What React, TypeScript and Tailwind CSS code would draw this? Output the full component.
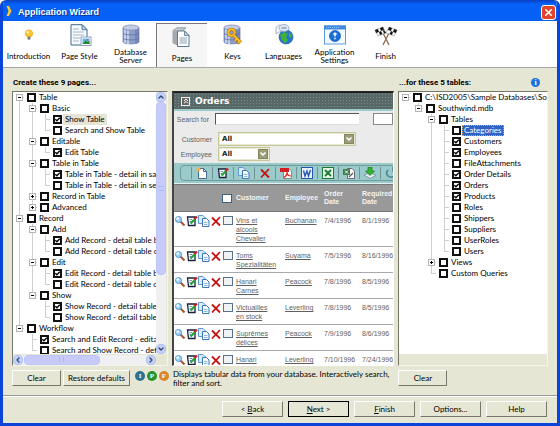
import React from 'react';
import { X, ChevronUp, ChevronDown, ChevronLeft, ChevronRight, ChevronsUp } from 'lucide-react';

type Node = {
  label: string;
  checked?: boolean;
  collapsed?: boolean;
  tone?: 'soft' | 'active';
  children?: Node[];
};

const pageTree: Node[] = [
  {
    label: 'Table',
    children: [
      {
        label: 'Basic',
        children: [
          { label: 'Show Table', checked: true, tone: 'soft' },
          { label: 'Search and Show Table' },
        ],
      },
      { label: 'Editable', children: [{ label: 'Edit Table', checked: true }] },
      {
        label: 'Table in Table',
        children: [
          { label: 'Table in Table - detail in same row', checked: true },
          { label: 'Table in Table - detail in separate row' },
        ],
      },
      { label: 'Record in Table', collapsed: true },
      { label: 'Advanced', collapsed: true },
    ],
  },
  {
    label: 'Record',
    children: [
      {
        label: 'Add',
        children: [
          { label: 'Add Record - detail table below', checked: true },
          { label: 'Add Record - detail table on tab' },
        ],
      },
      {
        label: 'Edit',
        children: [
          { label: 'Edit Record - detail table below', checked: true },
          { label: 'Edit Record - detail table on tab' },
        ],
      },
      {
        label: 'Show',
        children: [
          { label: 'Show Record - detail table below', checked: true },
          { label: 'Show Record - detail table on tab' },
        ],
      },
    ],
  },
  {
    label: 'Workflow',
    children: [
      { label: 'Search and Edit Record - editable', checked: true },
      { label: 'Search and Show Record - detail' },
    ],
  },
];

const tableTree: Node[] = [
  {
    label: 'C:\\ISD2005\\Sample Databases\\Southwind',
    children: [
      {
        label: 'Southwind.mdb',
        children: [
          {
            label: 'Tables',
            children: [
              { label: 'Categories', tone: 'active' },
              { label: 'Customers', checked: true },
              { label: 'Employees', checked: true },
              { label: 'FileAttachments' },
              { label: 'Order Details', checked: true },
              { label: 'Orders', checked: true },
              { label: 'Products', checked: true },
              { label: 'Roles' },
              { label: 'Shippers' },
              { label: 'Suppliers' },
              { label: 'UserRoles' },
              { label: 'Users' },
            ],
          },
          { label: 'Views', collapsed: true },
          { label: 'Custom Queries' },
        ],
      },
    ],
  },
];

const orders = [
  ['Vins et', 'alcools', 'Chevalier', 'Buchanan', '7/4/1996', '8/1/1996'],
  ['Toms', 'Spezialitäten', '', 'Suyama', '7/5/1996', '8/16/1996'],
  ['Hanari', 'Carnes', '', 'Peacock', '7/8/1996', '8/5/1996'],
  ['Victuailles', 'en stock', '', 'Leverling', '7/8/1996', '8/5/1996'],
  ['Suprêmes', 'délices', '', 'Peacock', '7/9/1996', '8/6/1996'],
  ['Hanari', 'Carnes', '', 'Leverling', '7/10/1996', '7/24/1996'],
];

/* ---------- tree ---------- */

type GuideProps = { up?: boolean; down?: boolean; across?: boolean; box?: 'plus' | 'minus' };

const Guide = ({ up, down, across, box }: GuideProps) => (
  <svg className="w-[13px] h-[11px] shrink-0" viewBox="0 0 13 11" fill="none" stroke="#cfcfcf" shapeRendering="crispEdges">
    {up && <path d="M6.5 0V5.5" />}
    {down && <path d="M6.5 5.5V11" />}
    {across && <path d="M6 5.5H11" />}
    {box && (
      <>
        <rect x="3.5" y="2.5" width="6" height="6" fill="#fff" stroke="#b4b4b4" />
        <path d="M5 5.5H8" stroke="#000" />
        {box === 'plus' && <path d="M6.5 4V7" stroke="#000" />}
      </>
    )}
  </svg>
);

const Tick = () => (
  <svg className="absolute inset-0 w-[9px] h-[9px] pointer-events-none" viewBox="0 0 9 9" fill="none" stroke="#000" strokeWidth="1.3">
    <path d="M2.3 4.2L3.9 5.8L6.8 2.7" />
  </svg>
);

const TreeLevel = ({ nodes, trail = [] }: { nodes: Node[]; trail?: boolean[] }) => (
  <ul>
    {nodes.map((node, i) => {
      const isLast = i === nodes.length - 1;
      const hasBox = Boolean(node.children || node.collapsed);
      const tone =
        node.tone === 'active'
          ? 'bg-[#2f62c4] text-white outline outline-1 -outline-offset-1 outline-dotted outline-[#d8a860]'
          : node.tone === 'soft'
            ? 'bg-[#e6e4d4]'
            : '';
      return (
        <li key={node.label}>
          <div className="flex items-center h-[11px]">
            {trail.map((open, depth) => (
              <Guide key={depth} up={open} down={open} />
            ))}
            <Guide
              up={trail.length > 0 || i > 0}
              down={!isLast}
              across
              box={hasBox ? (node.collapsed ? 'plus' : 'minus') : undefined}
            />
            <label className="flex items-center whitespace-nowrap">
              <span className="relative w-[9px] h-[9px] ml-px mr-px shrink-0">
                <input
                  type="checkbox"
                  defaultChecked={node.checked}
                  className="block appearance-none w-[9px] h-[9px] border-2 border-[#111] bg-white"
                />
                {node.checked && <Tick />}
              </span>
              <span className={`px-[2px] leading-[11px] ${tone}`}>{node.label}</span>
            </label>
          </div>
          {node.children && <TreeLevel nodes={node.children} trail={[...trail, !isLast]} />}
        </li>
      );
    })}
  </ul>
);

/* ---------- wizard step icons ---------- */

const Cylinder = () => (
  <>
    <path d="M2 4V18C2 20.5 18 20.5 18 18V4Z" fill="#8e9fcb" stroke="#6a7aa8" strokeWidth=".7" />
    <path d="M4 5V19M7 6V20" stroke="#c9d4ee" strokeWidth="1.8" />
    <path d="M15 6V19M17 5V18" stroke="#6878a8" strokeWidth="1.2" />
    <path d="M2 9C2 11.5 18 11.5 18 9M2 14C2 16.5 18 16.5 18 14" fill="none" stroke="#5f70a3" strokeWidth=".8" />
    <ellipse cx="10" cy="3.6" rx="8" ry="2.6" fill="#c3cde6" stroke="#7686b3" strokeWidth=".7" />
  </>
);

const StepIcon = ({ name }: { name: string }) => (
  <svg className="w-[22px] h-[22px] overflow-visible" viewBox="0 0 22 22" fill="none">
    {name === 'Introduction' && (
      <>
        <circle cx="11" cy="9.5" r="3.6" fill="#ffc72e" stroke="#efa21a" strokeWidth=".8" />
        <circle cx="9.8" cy="8.3" r="1.3" fill="#fff3b5" />
        <path d="M9.5 12.8H12.5V15L11 16L9.5 15Z" fill="#777f88" />
      </>
    )}
    {name === 'Page Style' && (
      <>
        <path d="M2 .7H13L18 5.7V21H2Z" fill="#f7fbff" stroke="#3c6c8c" />
        <path d="M13 .7V5.7H18Z" fill="#b8d4e8" stroke="#3c6c8c" strokeWidth=".8" />
        <path d="M4 5H10M4 8H15M4 11H15M4 14H11M4 17H10" stroke="#a9b6c2" />
        <rect x="12" y="13" width="10" height="8.5" fill="#fff" stroke="#8ea3ba" />
        <rect x="13.5" y="14.5" width="7" height="5.5" fill="#65b7ef" />
        <path d="M13.5 20L16.5 16.5L18.5 18L20.5 17V20Z" fill="#23882d" />
        <circle cx="18.5" cy="16" r="1" fill="#e85a27" />
      </>
    )}
    {name === 'Database Server' && <g transform="translate(1 0)"><Cylinder /></g>}
    {name === 'Pages' && (
      <>
        <path d="M2 3.5L6 .8H15L12 3.5V19L2 16Z" fill="#c6cacd" stroke="#858b90" strokeWidth=".8" />
        <path d="M2 3.5H7V19L2 16Z" fill="#a3a9ae" />
        <path d="M6.5 4H13.5L18 8.5V19.5H6.5Z" fill="#fff" stroke="#58788c" />
        <path d="M13.5 4V8.5H18Z" fill="#b9d5e6" stroke="#58788c" strokeWidth=".8" />
        <rect x="8.5" y="10" width="7.5" height="7" fill="#c5d1d9" />
      </>
    )}
    {name === 'Keys' && (
      <>
        <Cylinder />
        <circle cx="9.5" cy="8.5" r="3.2" stroke="#a66a08" strokeWidth="3.2" />
        <circle cx="9.5" cy="8.5" r="3.2" stroke="#fbc02a" strokeWidth="2" />
        <path d="M11.5 11L19 18.5M15 14.5L12.5 17M17.5 17L15.5 19.5" stroke="#a66a08" strokeWidth="3" />
        <path d="M11.5 11L19 18.5M15 14.5L12.8 16.8M17.5 17L15.8 19" stroke="#fbc02a" strokeWidth="1.8" />
      </>
    )}
    {name === 'Languages' && (
      <>
        <circle cx="13" cy="13" r="7" fill="#2674cf" stroke="#174f8f" strokeWidth=".6" />
        <path d="M7 11L11 8L15 10L13 13L15 16L12 19L9 16ZM16 8L19 11L18 14L16 12Z" fill="#3fb338" />
        <path d="M3 5C3 0 10 0 10 4C10 8 4 8 3 10Z" fill="#f5f9ff" stroke="#8ba2bd" strokeWidth=".8" />
        <ellipse cx="11" cy="4" rx="5" ry="3.5" fill="#dce8f4" stroke="#8ba2bd" strokeWidth=".8" />
        <path d="M8.5 4H13.5" stroke="#6a7f99" />
      </>
    )}
    {name === 'Application Settings' && (
      <>
        <rect x=".5" y="2" width="21" height="18" fill="#f4f9ff" stroke="#5b9bdc" />
        <rect x="0" y="1.5" width="22" height="4" fill="#3d8be0" />
        <path d="M2 3.5H16" stroke="#8fc0f4" strokeDasharray="1 1" />
        <circle cx="11" cy="12" r="5.5" fill="#1a6fdc" stroke="#0c4fae" strokeWidth=".7" />
        <path d="M11 8.5V12.5M11 13.8V15.3M9.3 10H12.7" stroke="#fff" strokeWidth="1.5" />
      </>
    )}
    {name === 'Finish' && (
      <>
        <path d="M7 7L14 21M15 7L8 21" stroke="#8a6a50" strokeWidth="1.3" />
        <path d="M0 6L8 3L11 9L3 12ZM22 6L14 3L11 9L19 12Z" fill="#fff" stroke="#777" strokeWidth=".5" />
        <path d="M0 6L3 5L4 8L1 9ZM5 4L8 3L9 6L6 7ZM4 8L6 7L7.5 10L5 11ZM9 6L11 9L9 9.5L8 7ZM22 6L19 5L18 8L21 9ZM17 4L14 3L13 6L16 7ZM18 8L16 7L14.5 10L17 11Z" fill="#151515" />
      </>
    )}
  </svg>
);

const steps = ['Introduction', 'Page Style', 'Database Server', 'Pages', 'Keys', 'Languages', 'Application Settings', 'Finish'];

/* ---------- small glyphs for the preview ---------- */

const Glyph = ({ name }: { name: string }) => (
  <svg className="w-3 h-3 shrink-0" viewBox="0 0 12 12" fill="none">
    {name === 'search' && (
      <>
        <path d="M6.5 6.5L10.5 10.5" stroke="#b0502c" strokeWidth="2" />
        <circle cx="4.5" cy="4.5" r="3" fill="#9fd3f7" stroke="#4f94c9" />
        <circle cx="3.7" cy="3.5" r="1.2" fill="#fff" />
      </>
    )}
    {name === 'new' && (
      <>
        <path d="M2.5 1.5H7.5L10.5 4.5V11.5H2.5Z" fill="#fff" stroke="#456b90" />
        <path d="M7.5 1.5V4.5H10.5" stroke="#456b90" />
        <circle cx="2.5" cy="2.5" r="2" fill="#ffac38" />
      </>
    )}
    {name === 'edit' && (
      <>
        <path d="M1.5 2H9V10.5H2.5Z" fill="#fff" stroke="#14203c" strokeWidth="1.3" />
        <path d="M3.5 4.5H6M3.5 6.5H5" stroke="#7a96bd" />
        <path d="M4.5 8.5L9 4" stroke="#27a53a" strokeWidth="2.4" />
        <path d="M8.5 4L11 1.5" stroke="#d02020" strokeWidth="2.4" />
      </>
    )}
    {name === 'copy' && (
      <>
        <path d="M.5 .5H5L7.5 3V8.5H.5Z" fill="#d9ebfd" stroke="#5c97d3" />
        <path d="M4.5 3.5H8.5L11 6V11.5H4.5Z" fill="#f4faff" stroke="#3c74b8" />
        <path d="M6 7.5H9.5M6 9.5H9.5" stroke="#8fb7e4" />
      </>
    )}
    {name === 'delete' && <path d="M2 2.5L10 10.5M10 2L2 10.5" stroke="#c41212" strokeWidth="1.8" />}
    {name === 'pdf' && (
      <>
        <path d="M3.5 1.5H9L11.5 4V11.5H3.5Z" fill="#fff" stroke="#888" />
        <rect x="0" y="1" width="9" height="4" fill="#d3201f" />
        <path d="M4 10.5C7.5 8 7 5 7 5C7 8 9 9 11 9" stroke="#d3201f" strokeWidth="1.2" />
      </>
    )}
    {name === 'word' && (
      <>
        <rect x=".5" y=".5" width="11" height="11" fill="#e9f1ff" stroke="#2458ae" />
        <path d="M2.5 3.5L4 9L6 4L7.5 9L9.5 3" stroke="#2458ae" strokeWidth="1.4" />
      </>
    )}
    {name === 'excel' && (
      <>
        <rect x=".5" y=".5" width="11" height="11" fill="#e7f7e7" stroke="#1c7a34" />
        <path d="M3 3L9 9M9 3L3 9" stroke="#1c7a34" strokeWidth="1.9" />
      </>
    )}
    {name === 'export' && (
      <>
        <path d="M4.5 1.5H9L11.5 4V11.5H4.5Z" fill="#fff" stroke="#667" />
        <rect x="0" y="2" width="7" height="6" fill="#3f7d4c" />
        <path d="M2 3.5L5 6.5M5 3.5L2 6.5" stroke="#fff" />
        <path d="M6 10L10 6" stroke="#555" strokeWidth="1.3" />
      </>
    )}
    {name === 'import' && (
      <>
        <path d="M0 8L6 5.5L12 8.5L6 11.5Z" fill="#e8eef4" stroke="#647d93" strokeWidth=".7" />
        <path d="M4 0H8V4H10.5L6 8.5L1.5 4H4Z" fill="#35b52f" stroke="#187b1c" strokeWidth=".7" />
      </>
    )}
    {name === 'refresh' && <path d="M3 3C-1 8 5 12 9 9C11 7 10 4 8 3M8 0V4H11.5" stroke="#4c8596" strokeWidth="1.6" />}
  </svg>
);

const tools = ['new', 'edit', 'copy', 'delete', 'pdf', 'word', 'excel', 'export', 'import', 'refresh'];
const rowTools = ['search', 'edit', 'copy', 'delete'];

const SelectBox = ({ id, className }: { id: string; className: string }) => (
  <div className={`relative ${className}`}>
    <select
      id={id}
      className="block appearance-none w-full h-[14px] pl-[3px] border border-[#c5c798] outline outline-1 -outline-offset-2 outline-[#e9ead2] bg-white text-[7px] font-bold text-[#222] font-['DejaVu_Sans',sans-serif]"
    >
      <option>All</option>
    </select>
    <span className="absolute right-[2px] top-[2px] w-[10px] h-[10px] bg-[#9d9d79] border border-[#85855f] flex items-center justify-center pointer-events-none">
      <ChevronDown className="w-2 h-2 text-white shrink-0" strokeWidth={5} />
    </span>
  </div>
);

const Preview = () => (
  <section className="min-w-0 overflow-hidden border-l-2 border-t-2 border-l-[#444] border-t-[#222] border-r border-r-white border-b border-b-white bg-white font-['Liberation_Sans',sans-serif] text-[7px] text-[#5f5f5f]">
    <div className="h-4 flex items-center gap-[5px] pl-[7px] bg-[#5a6767] bg-[radial-gradient(#6f9291_25%,transparent_30%)] bg-[size:3px_3px]">
      <button aria-label="Collapse" className="w-[9px] h-[9px] bg-[#666] border border-[#eee] flex items-center justify-center">
        <ChevronsUp className="w-2 h-2 text-white shrink-0" strokeWidth={3} />
      </button>
      <h2 className="text-[9px] leading-4 font-bold text-white font-['DejaVu_Sans',sans-serif]">Orders</h2>
    </div>
    <div className="h-[2px] bg-[#9bcaca]" />

    <div className="bg-[#ebebeb] pt-[2px] pb-[2px]">
      <div className="flex items-center">
        <label htmlFor="search" className="w-[38px] mr-[6px] text-right whitespace-nowrap">Search for</label>
        <input
          id="search"
          type="text"
          className="w-[156px] h-3 bg-white border-l border-t border-[#555] border-b border-b-[#ddd]"
        />
        <button aria-label="Go" className="w-5 h-3 ml-[14px] shrink-0 bg-white border border-[#888]" />
      </div>
      <div className="flex items-center mt-[7px]">
        <label htmlFor="customer" className="w-[38px] mr-[6px] text-right">Customer</label>
        <SelectBox id="customer" className="w-[138px]" />
      </div>
      <div className="flex items-center mt-px">
        <label htmlFor="employee" className="w-[38px] mr-[6px] text-right">Employee</label>
        <SelectBox id="employee" className="w-[52px]" />
      </div>
    </div>

    <div className="bg-[#9acaca] h-5 pt-[2px] pl-[6px] overflow-hidden">
      <div className="flex h-4 w-max pl-[10px] border border-[#6d9b9c] rounded-l-sm">
        {tools.map((tool) => (
          <button key={tool} aria-label={tool} className="w-[21px] my-px border-l border-[#6f9293] flex items-center justify-center">
            <Glyph name={tool} />
          </button>
        ))}
      </div>
    </div>
    <div className="h-px bg-[#e3f1f1]" />

    <table className="w-full min-w-[230px] table-fixed text-left">
      <colgroup>
        <col className="w-[48px]" />
        <col className="w-[14px]" />
        <col className="w-[49px]" />
        <col className="w-[39px]" />
        <col className="w-[38px]" />
        <col />
      </colgroup>
      <thead>
        <tr className="bg-[#999] border-t border-b border-[#777] text-[#f4f4f4] leading-[8px] h-[27px]">
          <th />
          <th>
            <input type="checkbox" aria-label="Select all" className="block appearance-none w-[10px] h-[9px] bg-white border border-[#3d6181]" />
          </th>
          <th>Customer</th>
          <th>Employee</th>
          <th>Order<br />Date</th>
          <th>Required<br />Date</th>
        </tr>
      </thead>
      <tbody>
        {orders.map((row, i) => (
          <tr key={i} className="align-top border-b border-[#aaa] leading-[9px] whitespace-nowrap">
            <td className="pt-[3px]">
              <div className="flex">
                {rowTools.map((tool) => (
                  <button key={tool} aria-label={tool}><Glyph name={tool} /></button>
                ))}
              </div>
            </td>
            <td className="pt-1 pl-px">
              <input type="checkbox" aria-label={`Select order ${i + 1}`} className="block appearance-none w-[10px] h-[9px] bg-[#f2f2f2] border border-[#54718d]" />
            </td>
            <td className="pt-1 pb-[3px]">
              <a href="#" className="underline">
                {row[0]}<br />{row[1]}{row[2] && <><br />{row[2]}</>}
              </a>
            </td>
            <td className="pt-1"><a href="#" className="underline">{row[3]}</a></td>
            <td className="pt-1">{row[4]}</td>
            <td className="pt-1">{row[5]}</td>
          </tr>
        ))}
      </tbody>
    </table>
  </section>
);

/* ---------- chrome ---------- */

const scrollBtn = 'w-[10px] h-[10px] shrink-0 rounded-sm bg-[#c3d1fb] border border-[#b2c0ee] flex items-center justify-center text-[#34466b]';
const pushBtn = 'h-4 bg-[#e6e6d5] border border-t-white border-l-white border-r-[#77776c] border-b-[#77776c] flex items-center justify-center whitespace-nowrap';
const panel = 'min-w-0 overflow-hidden flex flex-col border border-l-[#77776c] border-t-[#77776c] border-r-[#f5f5ec] border-b-[#f5f5ec]';

const Badge = ({ letter, className }: { letter: string; className: string }) => (
  <span className={`w-[10px] h-[10px] rounded-full text-white font-bold text-[7px] leading-[10px] text-center font-['Liberation_Serif',serif] ${className}`}>
    {letter}
  </span>
);

const App = () => {
  return (
    <div className="h-screen flex flex-col overflow-hidden bg-[#e6e6d5] border-x-[3px] border-b-[3px] border-[#0a44d8] rounded-t-md font-['Lato',sans-serif] text-[8px] leading-[9px] text-black">
      <header className="h-[21px] shrink-0 flex items-center bg-linear-to-b from-[#0a3fc0] via-[#0562fa] via-20% to-[#0560f5] pl-[2px] pr-px">
        <svg className="w-[8px] h-[10px]" viewBox="0 0 8 10">
          <path d="M1.5 0L4 0L6.5 5L4 10H1.5L3.5 5Z" fill="#ffc928" />
        </svg>
        <h1 className="ml-[5px] mt-[3px] text-[9px] leading-[12px] font-bold text-white font-['Liberation_Sans',sans-serif] [text-shadow:1px_1px_0_#0a318f]">Application Wizard</h1>
        <button aria-label="Close" className="ml-auto mt-[3px] w-[15px] h-[15px] rounded-[3px] border border-white bg-[#e2452c] flex items-center justify-center text-white">
          <X className="w-[11px] h-[11px]" strokeWidth={3.5} />
        </button>
      </header>

      <nav className="h-[47px] shrink-0 flex bg-white border-b border-[#aaa]">
        {steps.map((step) => (
          <button
            key={step}
            className={`w-[51px] flex flex-col items-center ${
              step === 'Pages' ? 'mt-[2px] pt-[3px] border-l border-t border-[#777] bg-[#f6f6f6]' : 'pt-[3px]'
            }`}
          >
            <StepIcon name={step} />
            <span className={`h-5 flex items-center justify-center text-center leading-[8px] ${step.includes(' ') && step !== 'Page Style' ? 'w-[42px]' : ''}`}>
              {step}
            </span>
          </button>
        ))}
      </nav>

      <main className="flex-1 min-h-0 flex flex-col px-[9px]">
        <div className="h-[23px] shrink-0 grid grid-cols-[156fr_222fr_150fr] gap-1 items-center pt-[5px] font-bold font-['Roboto',sans-serif]">
          <h2 className="pl-px whitespace-nowrap">Create these 9 pages...</h2>
          <span />
          <div className="flex items-center justify-between pr-2">
            <h2 className="pl-px whitespace-nowrap">...for these 5 tables:</h2>
            <button aria-label="Info" className="w-[9px] h-[9px] rounded-full bg-[#1873dc] text-white text-[8px] leading-[9px] font-['Liberation_Serif',serif]">i</button>
          </div>
        </div>

        <div className="flex-1 min-h-0 grid grid-cols-[156fr_222fr_150fr] grid-rows-[minmax(0,1fr)] gap-1">
          <section className={panel}>
            <div className="flex-1 min-h-0 flex">
              <div className="flex-1 min-w-0 bg-white overflow-hidden">
                <TreeLevel nodes={pageTree} />
              </div>
              <div className="w-[10px] mr-px flex flex-col bg-[#f0f0f3]">
                <span className={scrollBtn}><ChevronUp className="w-2 h-2 shrink-0" strokeWidth={4} /></span>
                <span className="h-[66%] rounded-sm bg-[#c9cafc] border border-[#bcc6f4] flex items-center justify-center">
                  <span className="w-[5px] h-[5px] border-y border-[#a3bdf4]" />
                </span>
                <span className={`${scrollBtn} mt-auto`}><ChevronDown className="w-2 h-2 shrink-0" strokeWidth={4} /></span>
              </div>
            </div>
            <div className="h-[11px] flex items-center">
              <div className="flex-1 h-[10px] flex bg-[#f0f0f3]">
                <span className={scrollBtn}><ChevronLeft className="w-2 h-2 shrink-0" strokeWidth={4} /></span>
                <span className="w-[53%] ml-px rounded-sm bg-[#c9cafc] border border-[#bcc6f4] flex items-center justify-center">
                  <span className="w-[5px] h-[5px] border-x border-[#a3bdf4]" />
                </span>
                <span className={`${scrollBtn} ml-auto`}><ChevronRight className="w-2 h-2 shrink-0" strokeWidth={4} /></span>
              </div>
              <div className="w-[11px]" />
            </div>
          </section>

          <Preview />

          <section className={panel}>
            <div className="flex-1 min-h-0 bg-white overflow-hidden">
              <TreeLevel nodes={tableTree} />
            </div>
            <div className="h-[11px]" />
          </section>
        </div>

        <div className="h-[29px] shrink-0 grid grid-cols-[156fr_222fr_150fr] gap-1 pt-1">
          <div className="flex gap-[2px]">
            <button className={`${pushBtn} w-[49px]`}>Clear</button>
            <button className={`${pushBtn} w-[67px]`}>Restore defaults</button>
            <div className="flex gap-[2px] ml-[3px] pt-px">
              <Badge letter="I" className="bg-[#2b7390]" />
              <Badge letter="P" className="bg-[#269326]" />
              <Badge letter="F" className="bg-[#d9872a]" />
            </div>
          </div>
          <p>Displays tabular data from your database. Interactively search,<br />filter and sort.</p>
          <div>
            <button className={`${pushBtn} w-[49px]`}>Clear</button>
          </div>
        </div>
      </main>

      <footer className="h-7 shrink-0 flex justify-end gap-[5px] pt-[5px] pr-[10px] border-t border-t-[#999] shadow-[inset_0_1px_0_#fff]">
        <button className={`${pushBtn} w-[61px]`}><span>&lt; <u>B</u>ack</span></button>
        <button className={`${pushBtn} w-[61px] outline outline-1 outline-black -outline-offset-1`}><span><u>N</u>ext &gt;</span></button>
        <button className={`${pushBtn} w-[61px]`}><span><u>F</u>inish</span></button>
        <button className={`${pushBtn} w-[61px]`}>Options...</button>
        <button className={`${pushBtn} w-[61px]`}>Help</button>
      </footer>
    </div>
  );
};

export default App;
